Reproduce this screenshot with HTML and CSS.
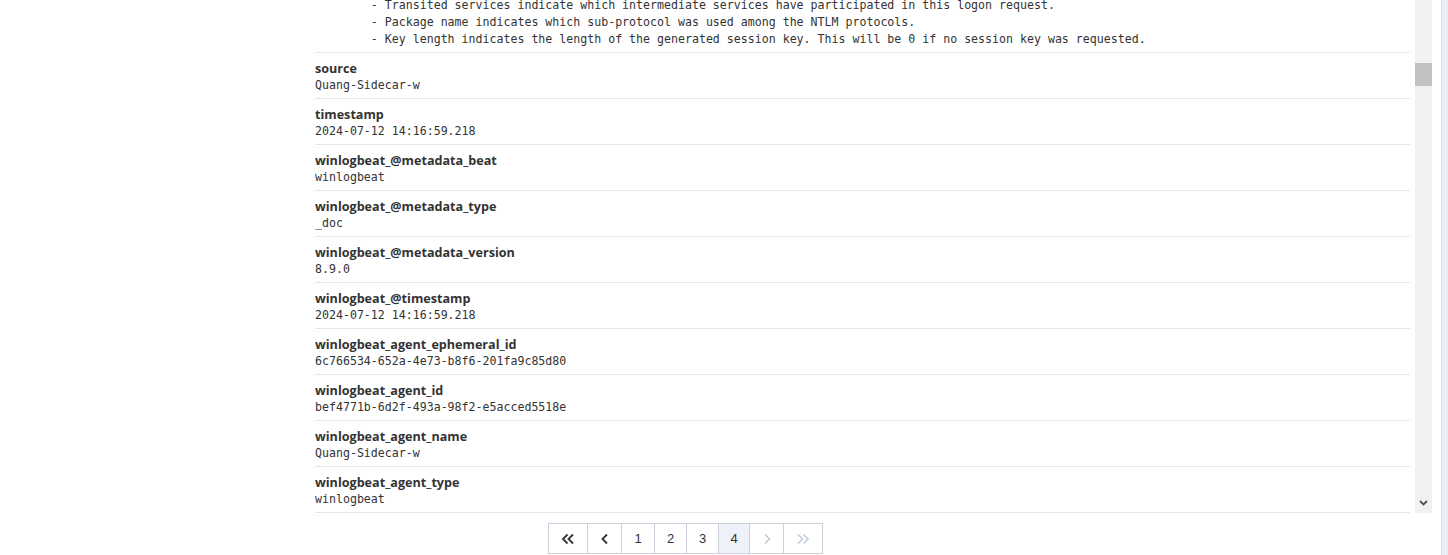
FILE: index.html
```html
<!DOCTYPE html>
<html>
<head>
<meta charset="utf-8">
<link rel="stylesheet" href="styles.css">
</head>
<body>
<div class="page">
  <div class="left-space"></div>
  <div class="main">
    <div class="scroll-box">
      <div class="list">
        <div class="row">
          <div class="label">message</div>
          <pre class="value">The authentication information fields provide detailed information about this specific logon request.
        - Logon GUID is a unique identifier that can be used to correlate this event with a KDC event.
        - Transited services indicate which intermediate services have participated in this logon request.
        - Package name indicates which sub-protocol was used among the NTLM protocols.
        - Key length indicates the length of the generated session key. This will be 0 if no session key was requested.</pre>
        </div>
        <div class="row"><div class="label">source</div><pre class="value">Quang-Sidecar-w</pre></div>
        <div class="row"><div class="label">timestamp</div><pre class="value">2024-07-12 14:16:59.218</pre></div>
        <div class="row"><div class="label">winlogbeat_@metadata_beat</div><pre class="value">winlogbeat</pre></div>
        <div class="row"><div class="label">winlogbeat_@metadata_type</div><pre class="value">_doc</pre></div>
        <div class="row"><div class="label">winlogbeat_@metadata_version</div><pre class="value">8.9.0</pre></div>
        <div class="row"><div class="label">winlogbeat_@timestamp</div><pre class="value">2024-07-12 14:16:59.218</pre></div>
        <div class="row"><div class="label">winlogbeat_agent_ephemeral_id</div><pre class="value">6c766534-652a-4e73-b8f6-201fa9c85d80</pre></div>
        <div class="row"><div class="label">winlogbeat_agent_id</div><pre class="value">bef4771b-6d2f-493a-98f2-e5acced5518e</pre></div>
        <div class="row"><div class="label">winlogbeat_agent_name</div><pre class="value">Quang-Sidecar-w</pre></div>
        <div class="row"><div class="label">winlogbeat_agent_type</div><pre class="value">winlogbeat</pre></div>
      </div>
      <div class="scrollbar">
        <div class="track-top"></div>
        <div class="thumb"></div>
        <div class="track-rest"></div>
        <div class="arrow-down">
          <svg width="9" height="6" viewBox="0 0 9 6"><polyline points="1,1 4.5,4.5 8,1" fill="none" stroke="#505050" stroke-width="1.8"/></svg>
        </div>
      </div>
    </div>
    <nav class="pager">
      <a class="pg pg-first">
        <svg width="14" height="12" viewBox="0 0 14 12"><polyline points="6.5,1.5 2,6 6.5,10.5" fill="none" stroke="#333" stroke-width="1.8"/><polyline points="12,1.5 7.5,6 12,10.5" fill="none" stroke="#333" stroke-width="1.8"/></svg>
      </a>
      <a class="pg pg-prev">
        <svg width="8" height="12" viewBox="0 0 8 12"><polyline points="6,1.5 1.5,6 6,10.5" fill="none" stroke="#333" stroke-width="1.8"/></svg>
      </a>
      <a class="pg pg-num">1</a>
      <a class="pg pg-num">2</a>
      <a class="pg pg-num">3</a>
      <a class="pg pg-num active">4</a>
      <a class="pg pg-next">
        <svg width="8" height="12" viewBox="0 0 8 12"><polyline points="2,1.5 6.5,6 2,10.5" fill="none" stroke="#c3cad6" stroke-width="1.6"/></svg>
      </a>
      <a class="pg pg-last">
        <svg width="14" height="12" viewBox="0 0 14 12"><polyline points="2,1.5 6.5,6 2,10.5" fill="none" stroke="#c3cad6" stroke-width="1.6"/><polyline points="7.5,1.5 12,6 7.5,10.5" fill="none" stroke="#c3cad6" stroke-width="1.6"/></svg>
      </a>
    </nav>
  </div>
  <div class="gap-right"></div>
  <div class="side-panel"></div>
</div>
</body>
</html>
```

FILE: styles.css
```css
html, body {
  margin: 0;
  padding: 0;
  background: #ffffff;
}

body {
  font-family: "Open Sans", "Noto Sans", Arial, sans-serif;
  color: #333333;
  overflow: hidden;
}

.page {
  display: flex;
  height: 555px;
}

.left-space {
  width: 315px;
  flex: none;
}

.main {
  width: 1117px;
  flex: none;
  display: flex;
  flex-direction: column;
}

.scroll-box {
  display: flex;
  height: 513px;
}

.list {
  width: 1095px;
  margin-right: 5px;
  height: 513px;
  overflow: hidden;
  display: flex;
  flex-direction: column;
  justify-content: flex-end;
}

.row {
  flex: none;
  border-bottom: 1px solid #e6e6e6;
  padding: 7px 0 4px;
}

.label {
  font-family: "Open Sans", "Noto Sans", sans-serif;
  font-weight: 700;
  font-size: 12.6px;
  line-height: 17px;
  color: #333333;
  white-space: nowrap;
}

.value {
  margin: 0;
  font-family: "DejaVu Sans Mono", "Liberation Mono", monospace;
  font-size: 11.6px;
  line-height: 17px;
  color: #333333;
  white-space: pre;
}

.scrollbar {
  width: 17px;
  flex: none;
  display: flex;
  flex-direction: column;
  background: #f1f1f1;
}

.track-top {
  height: 63px;
}

.thumb {
  height: 23px;
  background: #c1c1c1;
}

.track-rest {
  flex: 1;
}

.arrow-down {
  height: 17px;
  display: flex;
  align-items: center;
  justify-content: center;
  margin-bottom: 2px;
}

.pager {
  display: flex;
  margin: 10px 0 0 233px;
}

.pg {
  box-sizing: border-box;
  display: flex;
  align-items: center;
  justify-content: center;
  height: 31px;
  border: 1px solid #c9d1dc;
  margin-left: -1px;
  font-family: "Liberation Sans", Arial, sans-serif;
  font-size: 13px;
  color: #333333;
  background: #ffffff;
}

.pg-first { width: 40px; margin-left: 0; }
.pg-prev { width: 35px; }
.pg-num { width: 34px; }
.pg-num + .pg-num { width: 33px; }
.pg-num.active { background: #eef2f8; width: 32px; }
.pg-next { width: 35px; }
.pg-last { width: 40px; }

.gap-right {
  width: 9px;
  flex: none;
}

.side-panel {
  flex: 1;
  border-left: 1px solid #dcdee8;
  background: #eceef5;
}
```
